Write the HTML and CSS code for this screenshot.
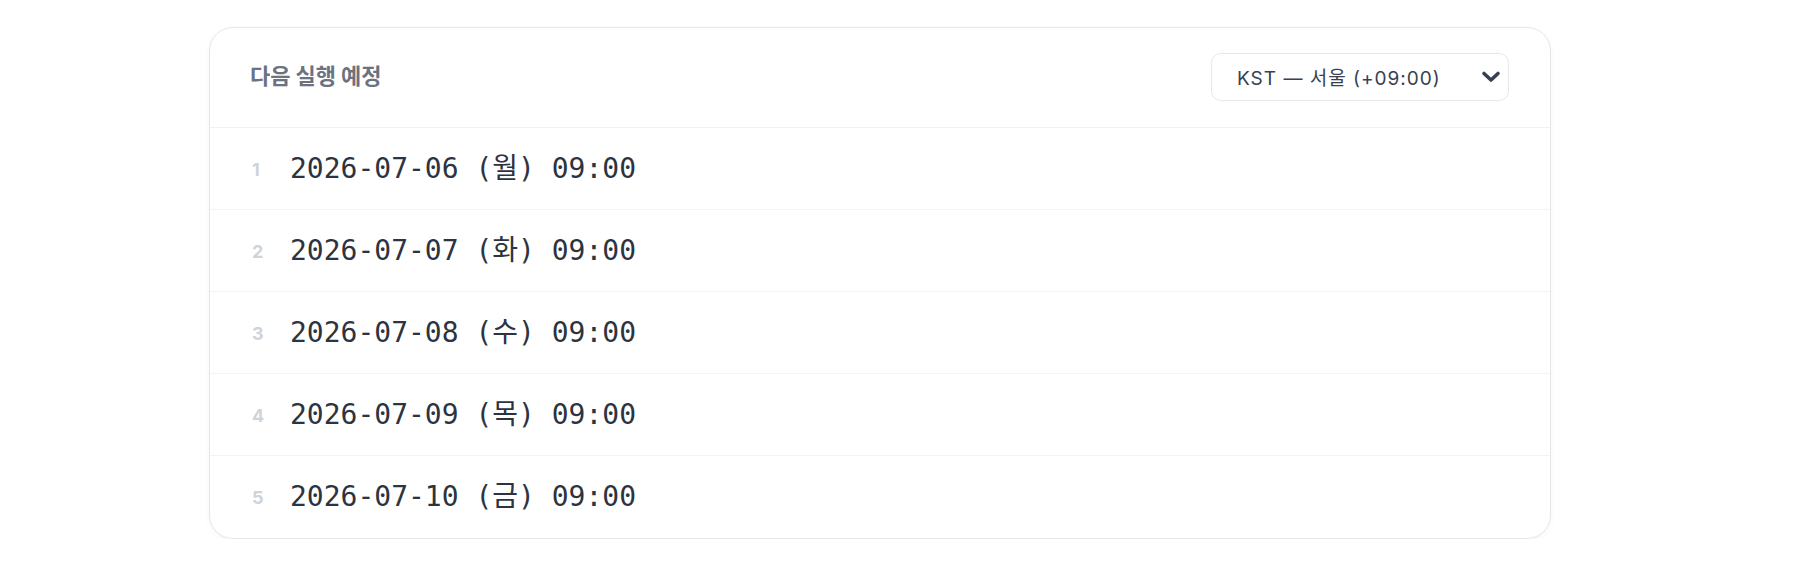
FILE: index.html
```html
<!DOCTYPE html>
<html>
<head>
    <title>다음 실행 예정</title>
    <link rel="stylesheet" href="styles.css">
</head>
<body>
    <div class="card">
        <div class="card-header">
            <h2>다음 실행 예정</h2>
            <div class="tz-select">
                <span>KST — 서울 (+09:00)</span>
                <svg width="20" height="14" viewBox="0 0 20 14">
                    <path d="M3 3.5 L10 10 L17 3.5" fill="none" stroke="#374151" stroke-width="3.6" stroke-linecap="round" stroke-linejoin="round"/>
                </svg>
            </div>
        </div>
        <ul class="runs">
            <li><span class="num">1</span><span class="when">2026-07-06 (월) 09:00</span></li>
            <li><span class="num">2</span><span class="when">2026-07-07 (화) 09:00</span></li>
            <li><span class="num">3</span><span class="when">2026-07-08 (수) 09:00</span></li>
            <li><span class="num">4</span><span class="when">2026-07-09 (목) 09:00</span></li>
            <li><span class="num">5</span><span class="when">2026-07-10 (금) 09:00</span></li>
        </ul>
    </div>
</body>
</html>
```

FILE: styles.css
```css
body {
    margin: 0;
    padding: 27px 0 0 209px;
    background-color: #fff;
    font-family: Inter, "Noto Sans CJK KR", sans-serif;
}

.card {
    width: 1342px;
    box-sizing: border-box;
    border: 1px solid #e5e7eb;
    border-radius: 24px;
    background-color: #fff;
    box-shadow: 0 2px 6px rgba(0, 0, 0, 0.04);
    overflow: hidden;
}

.card-header {
    display: flex;
    align-items: center;
    justify-content: space-between;
    height: 99px;
    padding: 0 41px 0 40px;
    border-bottom: 1px solid #f0f1f3;
}

.card-header h2 {
    margin: 0 0 8px 0;
    font-family: "Noto Sans CJK KR", sans-serif;
    font-size: 22px;
    line-height: 1;
    font-weight: 700;
    color: #6b7280;
}

.tz-select {
    display: flex;
    align-items: center;
    justify-content: space-between;
    width: 298px;
    height: 48px;
    box-sizing: border-box;
    margin-top: -2px;
    padding: 0 7px 0 25px;
    border: 1px solid #e5e7eb;
    border-radius: 10px;
    font-size: 19px;
    letter-spacing: 1px;
    color: #374151;
}

.runs {
    list-style-type: none;
    margin: 0;
    padding: 0;
}

.runs li {
    display: flex;
    align-items: center;
    height: 82px;
    box-sizing: border-box;
    padding: 0 41px 6px 41px;
    border-bottom: 1px solid #f3f4f6;
}

.runs li:last-child {
    border-bottom: none;
}

.num {
    width: 38px;
    margin-top: 7px;
    padding-left: 1px;
    font-size: 18px;
    font-weight: 700;
    color: #cfd3da;
}

.when {
    font-family: "DejaVu Sans Mono", "Noto Sans CJK KR", monospace;
    font-size: 28px;
    color: #2d3340;
}
```
